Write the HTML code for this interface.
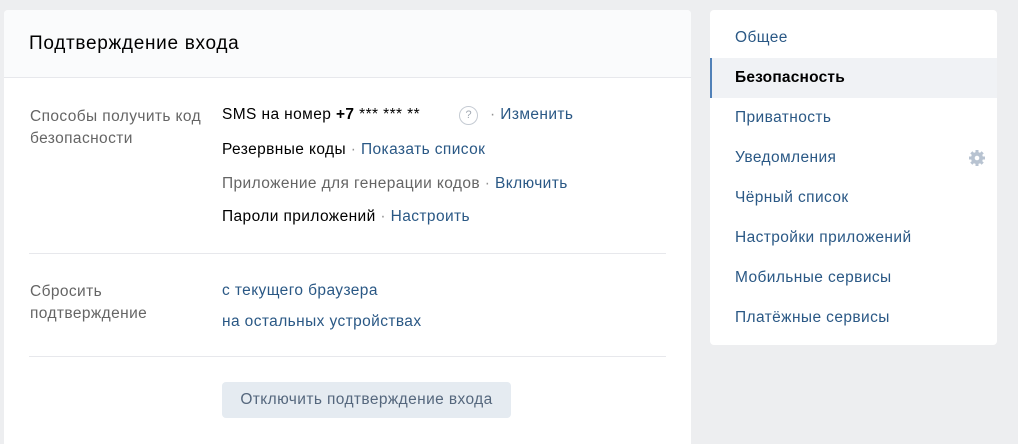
<!DOCTYPE html><html><head><meta charset="utf-8"><style>
html,body{margin:0;height:444px;overflow:hidden}
body{background:#edeef0;font-family:"Liberation Sans",sans-serif;font-size:15.5px;letter-spacing:0.4px;width:1018px;position:relative}
.main{position:absolute;left:4px;top:10px;width:687px;height:440px;background:#fff;border-radius:4px;}
.hd{height:67px;background:#fafbfc;border-bottom:1px solid #e7e8ec;border-radius:4px 4px 0 0}
.hd div{position:absolute;left:25px;top:23px;font-size:19px;letter-spacing:0.7px;color:#000}
.a{position:absolute;white-space:nowrap}
.g{color:#656565}.l{color:#2a5885}.d{color:#939393}
.sep{position:absolute;left:25px;width:637px;height:1px;background:#e7e8ec}
.side{position:absolute;left:710px;top:10px;width:287px;height:335px;background:#fff;border-radius:4px}
.it{position:absolute;left:25px;color:#2a5885}
.btn{position:absolute;left:218px;top:372px;width:289px;height:36px;background:#e5ebf1;border-radius:4px;color:#55677d;text-align:center;line-height:36px}
</style></head><body>
<div class="main"><div class="hd"><div>Подтверждение входа</div></div>
<div class="a g" style="left:26px;top:96px;line-height:22px">Способы получить код<br>безопасности</div>
<div class="a" style="left:218px;top:96px">SMS на номер <b>+7</b> *** *** **</div>
<div class="a" style="left:455px;top:96px;width:17px;height:17px;border:1px solid #c5cbd3;border-radius:50%;color:#a0a8b2;font-size:11px;letter-spacing:0;text-align:center;line-height:17px">?</div>
<div class="a l" style="left:486px;top:96px"><span class="d">· </span>Изменить</div>
<div class="a" style="left:218px;top:131px">Резервные коды <span class="d">·</span> <span class="l">Показать список</span></div>
<div class="a g" style="left:218px;top:165px">Приложение для генерации кодов <span class="d">·</span> <span class="l">Включить</span></div>
<div class="a" style="left:218px;top:198px">Пароли приложений <span class="d">·</span> <span class="l">Настроить</span></div>
<div class="sep" style="top:243px"></div>
<div class="a g" style="left:26px;top:271px;line-height:22px">Сбросить<br>подтверждение</div>
<div class="a l" style="left:218px;top:272px">с текущего браузера</div>
<div class="a l" style="left:218px;top:303px">на остальных устройствах</div>
<div class="sep" style="top:346px"></div>
<div class="btn">Отключить подтверждение входа</div>
</div>
<div class="side">
<div class="it" style="top:19px">Общее</div>
<div style="position:absolute;left:0;top:48px;width:287px;height:40px;background:#f0f2f5;border-left:2px solid #5181b8;box-sizing:border-box"></div>
<div class="it" style="top:59px;color:#000;font-weight:bold;letter-spacing:0.2px">Безопасность</div>
<div class="it" style="top:99px">Приватность</div>
<div class="it" style="top:139px">Уведомления</div>
<svg style="position:absolute;left:258px;top:139px" width="18" height="18" viewBox="0 0 18 18"><g fill="#b8c3d1"><circle cx="9" cy="9" r="6"/><g stroke="#b8c3d1" stroke-width="3"><line x1="9" y1="1" x2="9" y2="17"/><line x1="1" y1="9" x2="17" y2="9"/><line x1="3.3" y1="3.3" x2="14.7" y2="14.7"/><line x1="14.7" y1="3.3" x2="3.3" y2="14.7"/></g></g><circle cx="9" cy="9" r="2.3" fill="#fff"/></svg>
<div class="it" style="top:179px">Чёрный список</div>
<div class="it" style="top:219px">Настройки приложений</div>
<div class="it" style="top:259px">Мобильные сервисы</div>
<div class="it" style="top:299px">Платёжные сервисы</div>
</div>
</body></html>
